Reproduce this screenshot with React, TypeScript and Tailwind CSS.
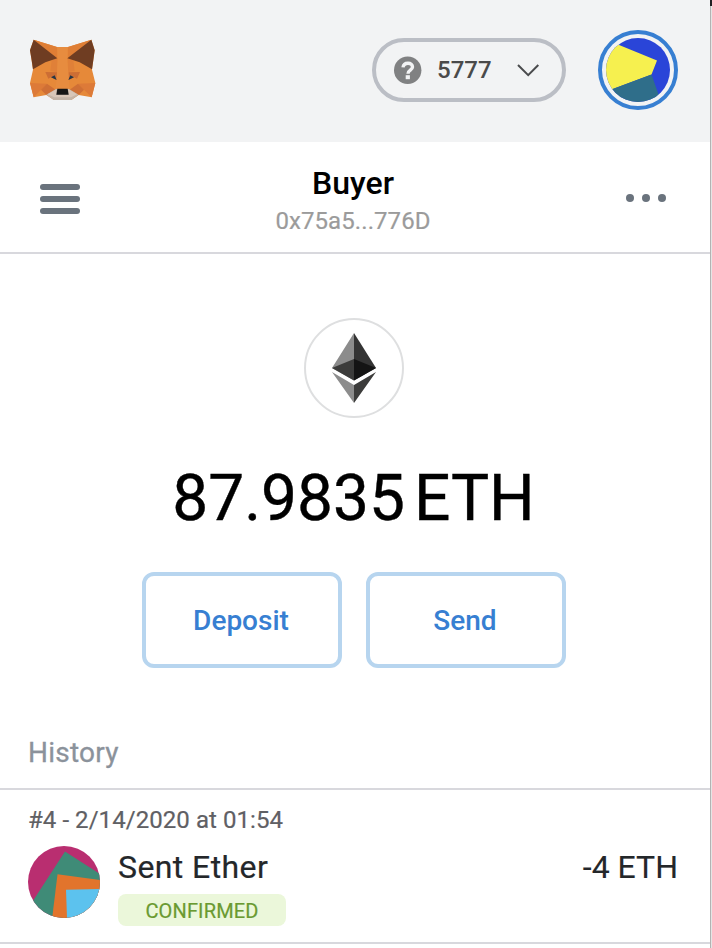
import React from "react";

function Fox() {
  return (
    <svg className="h-[62px] w-[68px]" viewBox="28 28 204 186">
      <path fill="#e68939" d="M42 30 L112 52 H145 L215 30 L225 62 L217 120 L227 160 L216 203 L177 196 L156 210 H102 L80 196 L42 203 L31 160 L40 120 L31 62Z" />
      <path fill="#df7e35" d="M42 30 L112 52 V86Z M215 30 L145 52 V86Z" />
      <path fill="#dd7a38" d="M31 160 L82 162 L42 203Z M227 160 L175 162 L216 203Z" />
      <path fill="#e08038" d="M113 86 L96 92 L92 124 L112 128Z M144 86 L161 92 L165 124 L145 128Z" />
      <path fill="#cf6f35" d="M82 162 L108 180 L80 196 L64 180Z M175 162 L150 180 L177 196 L193 180Z" />
      <path fill="#cd6e34" d="M77 127 L112 128 L111 151 L94 143 L86 147Z M181 127 L146 128 L147 151 L163 143 L172 147Z" />
      <path fill="#e78c3f" d="M113 52 H144 L142 86 L146 128 L150 178 H108 L112 128 L115 86Z" />
      <path fill="#6f3d22" d="M42 30 L113 86 L77 98 L40 119 L36 91 L31 62Z M215 30 L143 86 L180 98 L217 119 L221 91 L225 62Z" />
      <path fill="#c4b5a8" d="M80 195 L109 178 H148 L177 195 L155 211 H102Z" />
      <path fill="#d8c6b8" d="M84 194 L110 179 V196 H146 V179 L172 194 L154 203 H104Z" />
      <path fill="#273746" d="M94 143 L105 137 L111 151Z M163 143 L152 137 L146 151Z" />
      <path fill="#161616" d="M113 177 H144 L147 195 H110Z" />
    </svg>
  );
}

function NetworkPicker() {
  return (
    <button className="flex h-16 w-[194px] items-center rounded-full border-4 border-[#bbbec5] pl-[18px]">
      <svg className="size-7" viewBox="0 0 28 28">
        <circle cx="13.7" cy="14.3" r="13.7" fill="#808182" />
        <path d="M9 11.4C9.4 8.3 11.7 7.2 14 7.2C16.7 7.2 18.5 8.8 18.5 11C18.5 14.3 14 14.1 14 17.7" fill="none" stroke="#f2f3f4" strokeWidth="3.4" />
        <rect x="11.7" y="19.2" width="4.2" height="4" fill="#f2f3f4" />
      </svg>
      <span className="ml-[15px] text-[24px] font-medium leading-8 text-[#4a4a4a]">5777</span>
      <svg className="ml-6 h-4 w-6" viewBox="0 0 24 16">
        <path d="M2 3 L12.2 13.2 L22.3 3" fill="none" stroke="#4a4b4d" strokeWidth="2" />
      </svg>
    </button>
  );
}

function AccountAvatar() {
  return (
    <svg className="ml-8 size-20" viewBox="0 0 80 80">
      <defs><clipPath id="account"><circle cx="40" cy="40" r="32" /></clipPath></defs>
      <circle cx="40" cy="40" r="38" fill="#f2f3f4" stroke="#377fd2" strokeWidth="4" />
      <g clipPath="url(#account)">
        <path fill="#2a45d8" d="M0 0H80V80H0Z" />
        <path fill="#f6f04f" d="M0 0H12L20.5 14.8L59 30.5L53.5 44.5L0 64.5Z" />
        <path fill="#2f6e8a" d="M0 64.5L53.5 44.5L66 80H0Z" />
      </g>
    </svg>
  );
}

function Ether() {
  return (
    <div className="flex size-[100px] items-center justify-center rounded-full border-2 border-[#dedfe0]">
      <svg className="h-[70px] w-11" viewBox="0 0 44 70">
        <path fill="#8c8c8c" d="M22 0V47.5L0 35Z M22 52V70L0 39Z" />
        <path fill="#343434" d="M22 0V47.5L44 35Z" />
        <path fill="#3c3c3b" d="M22 52V70L44 39Z M22 26V47.5L0 35Z" />
        <path fill="#141414" d="M22 26V47.5L44 35Z" />
      </svg>
    </div>
  );
}

function TransactionAvatar() {
  return (
    <svg className="size-[72px] shrink-0" viewBox="0 0 72 72">
      <defs><clipPath id="tx"><circle cx="36" cy="36" r="36" /></clipPath></defs>
      <g clipPath="url(#tx)">
        <path fill="#b92e70" d="M0 0H72V72H0Z" />
        <path fill="#3f8b77" d="M37 5.5L72 28V72H-6L5.5 54Z" />
        <path fill="#e2742c" d="M29.5 28.3L72 34V72H24.2Z" />
        <path fill="#5cc2ee" d="M38 43.7L72 43V72H39Z" />
      </g>
    </svg>
  );
}

function ActionButton({ label }: { label: string }) {
  return (
    <button className="h-24 w-[200px] rounded-xl border-4 border-[#b7d5ef] pr-0.5 pt-0.5 text-[28px] font-medium leading-none text-[#377fd2]">{label}</button>
  );
}

export default function App() {
  return (
    <div className="flex h-[948px] w-[712px] overflow-hidden bg-white font-['Roboto',sans-serif]">
      <main className="flex w-[710px] shrink-0 flex-col">
        <header className="flex h-[142px] items-center bg-[#f2f3f4] pb-0.5 pl-[29px] pr-8">
          <Fox />
          <div className="ml-auto"><NetworkPicker /></div>
          <AccountAvatar />
        </header>
        <section className="flex h-28 items-center justify-between border-b-2 border-[#d8d8dd] pl-10 pr-11">
          <div className="flex w-10 flex-col gap-1.5 pt-1">
            <span className="h-1.5 rounded-full bg-[#6a737d]" />
            <span className="h-1.5 rounded-full bg-[#6a737d]" />
            <span className="h-1.5 rounded-full bg-[#6a737d]" />
          </div>
          <div className="pt-2 text-center">
            <h1 className="text-[32px] font-medium leading-10 text-black">Buyer</h1>
            <p className="text-[24px] leading-9 tracking-[0.08px] text-[#9b9b9b] [-webkit-text-stroke:0.2px]">0x75a5...776D</p>
          </div>
          <div className="flex gap-2 pt-0.5">
            <span className="size-2 rounded-full bg-[#6a737d]" />
            <span className="size-2 rounded-full bg-[#6a737d]" />
            <span className="size-2 rounded-full bg-[#6a737d]" />
          </div>
        </section>
        <section className="flex h-[466px] flex-col items-center pr-0.5 pt-16">
          <Ether />
          <div className="mt-[41px] flex gap-[9px] pr-px text-[64px] leading-[80px] text-black [-webkit-text-stroke:0.4px]">
            <span>87.9835</span><span>ETH</span>
          </div>
          <div className="mt-[33px] flex gap-6">
            <ActionButton label="Deposit" />
            <ActionButton label="Send" />
          </div>
        </section>
        <h2 className="h-[70px] border-b-2 border-[#d8d8dd] pl-7 pt-[13px] text-[28px] leading-10 tracking-[0.25px] text-[#8b929b] [-webkit-text-stroke:0.3px]">History</h2>
        <section className="h-[154px] border-b-2 border-[#d8d8dd] pl-7 pr-8 pt-3">
          <p className="text-[24px] leading-9 tracking-[0.06px] text-[#5f6064] [-webkit-text-stroke:0.2px]">#4 - 2/14/2020 at 01:54</p>
          <div className="mt-2 flex">
            <TransactionAvatar />
            <div className="ml-[18px]">
              <p className="text-[32px] leading-[42px] tracking-[0.4px] text-[#24272a] [-webkit-text-stroke:0.2px]">Sent Ether</p>
              <p className="mt-1.5 flex h-8 w-[168px] items-center justify-center rounded-lg bg-[#ebf7da] pt-0.5 text-[20px] tracking-[0.15px] text-[#6a9a31] [-webkit-text-stroke:0.2px]">CONFIRMED</p>
            </div>
            <p className="ml-auto text-[32px] leading-[42px] text-[#24272a] [-webkit-text-stroke:0.1px]">-4 ETH</p>
          </div>
        </section>
      </main>
      <div className="flex w-0.5 flex-col">
        <div className="h-1.5 bg-[#202124]" />
        <div className="flex-1 border-l border-[#b3b3b3] bg-[#e5e5e5]" />
      </div>
    </div>
  );
}
